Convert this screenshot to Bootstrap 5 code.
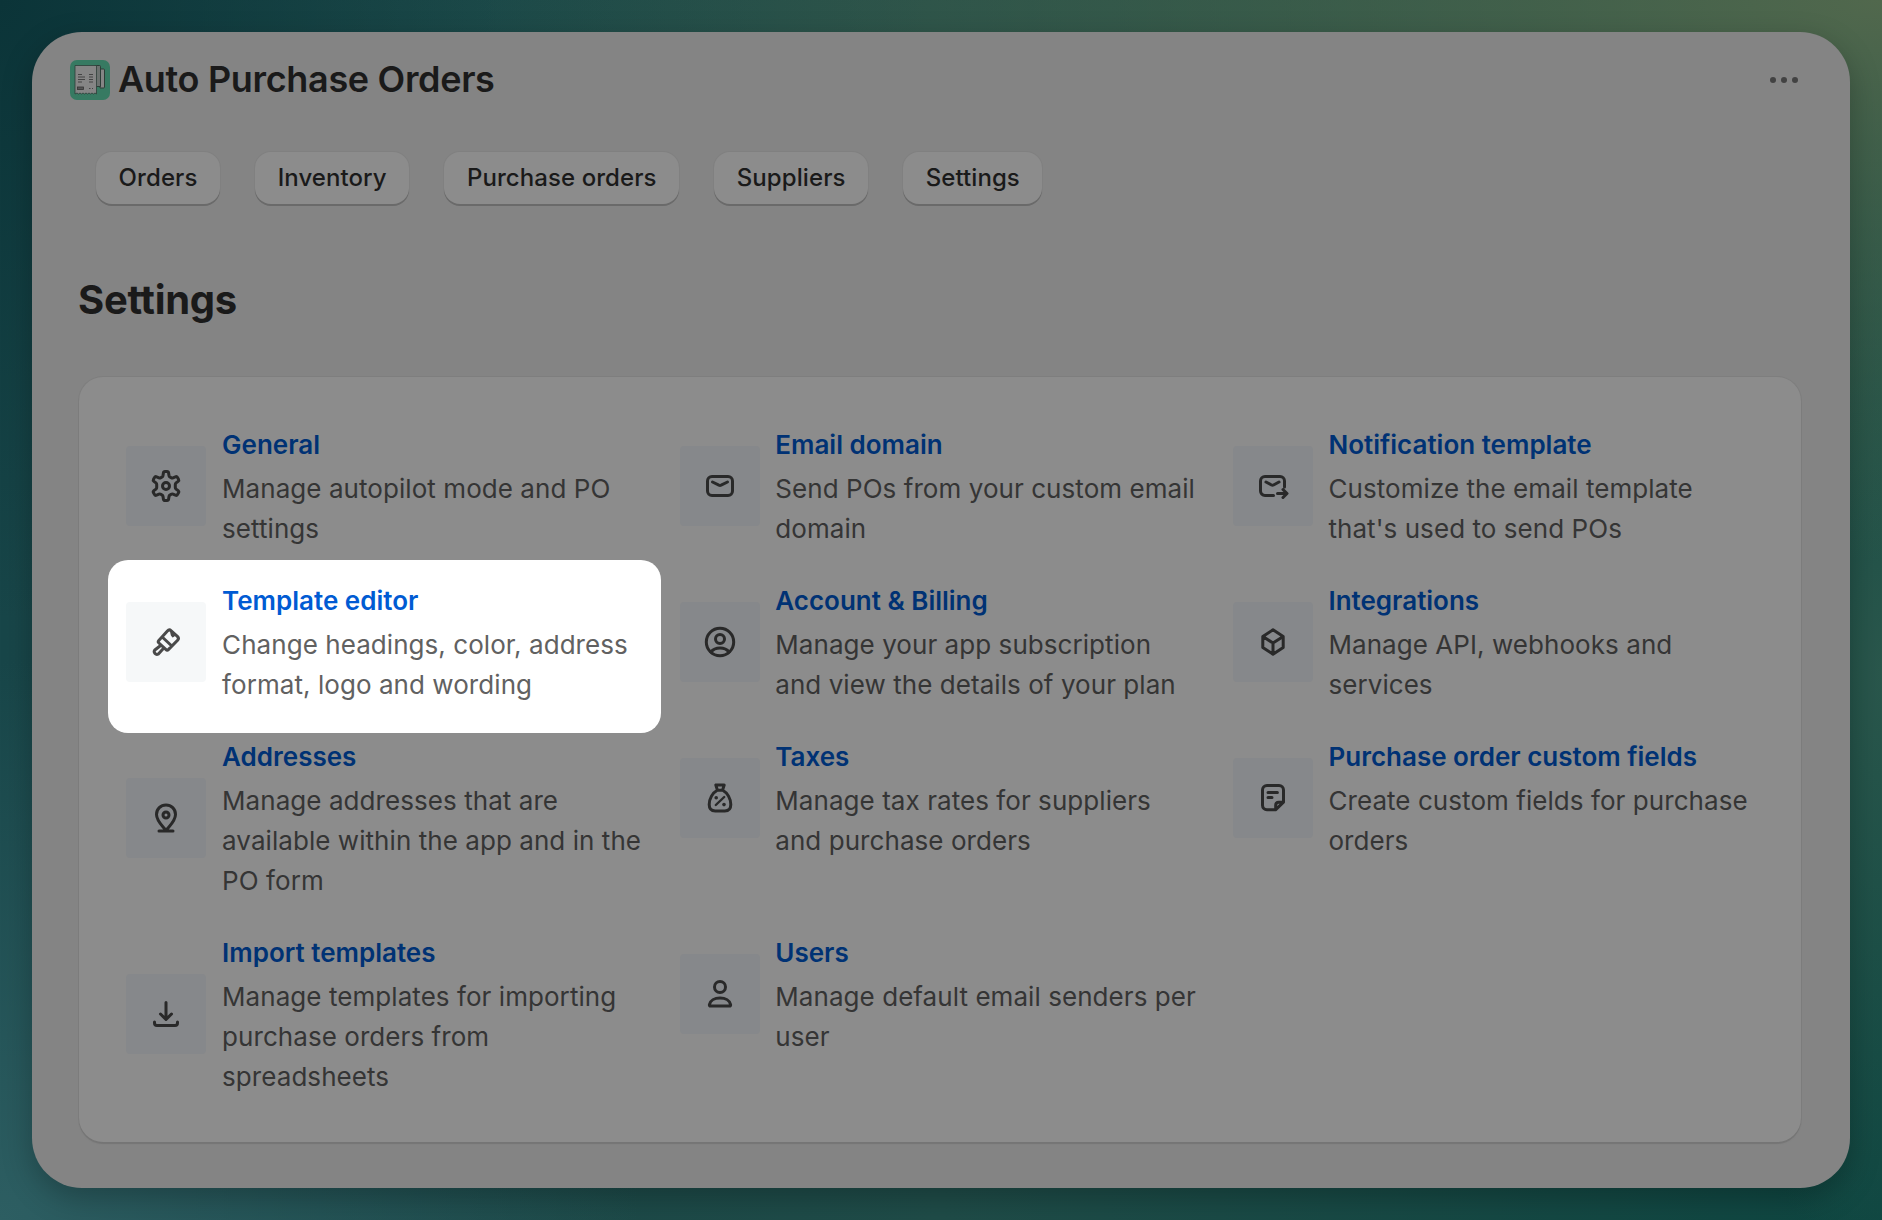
<!DOCTYPE html>
<html lang="en">
<head>
<meta charset="utf-8">
<meta name="viewport" content="width=device-width, initial-scale=1">
<title>Auto Purchase Orders – Settings</title>
<link href="https://cdn.jsdelivr.net/npm/bootstrap@5.3.0/dist/css/bootstrap.min.css" rel="stylesheet">
<style>
  body {
    height: 1220px; padding: 32px; overflow: hidden;
    font-family: Inter, "Liberation Sans", sans-serif; color: #1a1a1a;
    background:
      radial-gradient(ellipse 500px 620px at 0 0, #0b3438 0%, rgba(11,52,56,0) 100%),
      radial-gradient(ellipse 1400px 560px at 100% 0, #51684d 0%, rgba(80,102,77,0) 100%),
      radial-gradient(ellipse 640px 560px at 0 100%, #2d5e62 0%, rgba(43,89,93,0) 100%),
      radial-gradient(ellipse 200px 600px at 100% 55%, #2a574c 0%, rgba(42,87,76,0) 100%),
      linear-gradient(90deg, #184649 0%, #1f4c48 50%, #0e4641 100%);
  }
  .app-shell { height: 1156px; border-radius: 50px; background: #848484; box-shadow: 0 10px 30px rgba(0,0,0,.25); }
  .app-header { height: 68px; padding: 28px 50px 0 38px; }
  .app-logo { width: 40px; height: 40px; margin-right: 8px; }
  .app-title { font-size: 36px; line-height: 40px; font-weight: 600; letter-spacing: -.33px; padding-bottom: 2px; }
  .tabs-row { gap: 35px; padding: 52px 0 0 64px; }
  .tab-btn {
    height: 52px; padding: 0 22.600px; border: 0; border-radius: 16px; background: #8c8c8c; color: #1a1a1a;
    font-size: 24px; line-height: 52px; font-weight: 550; letter-spacing: .08px;
    box-shadow: 0 2px 0 #6a6a6a, 0 0 0 1px #808080;
  }
  .page-title { margin: 72px 0 0 46px; font-size: 40px; line-height: 48px; font-weight: 700; letter-spacing: -.3px; }
  .settings-card {
    margin: 53px 49px 0 47px; padding: 47px 46px 46px 47.400px; border: 0; border-radius: 24px; background: #8c8c8c; color: #353535;
    box-shadow: 0 2px 1px #757575, 0 0 0 1px #7e7e7e;
  }
  .settings-grid { display: grid; grid-template-columns: repeat(3, 521.2px); column-gap: 32px; row-gap: 32px; }
  .setting { gap: 15.700px; position: relative; }
  .tile { width: 80px; height: 80px; border-radius: 4px; background: #86888b; color: #292929; }
  .tile svg { width: 40px; height: 40px; fill: none; stroke: currentColor; stroke-width: 1.5; stroke-linecap: round; stroke-linejoin: round; }
  .setting-body { padding-top: 1px; margin-bottom: -1px; }
  .setting-link { display: block; font-size: 26px; line-height: 40px; font-weight: 600; color: #003274; text-decoration: none; margin-bottom: 4px; white-space: nowrap; }
  .setting-text { font-size: 26px; line-height: 40px; letter-spacing: .06px; margin: 0; }
  .spotlit { z-index: 1; color: #616161; }
  .spotlit::before { content: ""; position: absolute; inset: -20px -13px -29px -18px; z-index: -1; border-radius: 20px; background: #fff; }
  .spotlit .tile { background: #f6f8f9; color: #4a4a4a; }
  .spotlit .setting-link { color: #005bd3; }
</style>
</head>
<body>
<main class="app-shell d-flex flex-column">
  <header class="app-header d-flex align-items-center">
    <svg class="app-logo flex-shrink-0" viewBox="0 0 40 40" aria-hidden="true">
      <rect width="40" height="40" rx="7" fill="#377a62"/>
      <path d="M30 9h3.500q1 0 1 1v17q0 1-1 1H30z" fill="#858585" stroke="#2c3d37"/>
      <path d="M25 5.500h4.500q1 0 1 1v20H25z" fill="#6c716f" stroke="#2c3d37"/>
      <path d="M5 5.500h21.500V34l-1.500-1-1.500 1-1.500-1-1.500 1-1.500-1-1.500 1-1.500-1-1.500 1-1.500-1-1.500 1-1.500-1-1.500 1-1.500-1L5 34z" fill="#858585" stroke="#2c3d37" stroke-width=".8"/>
      <path d="M8 14.500h4M8 17h7M8 19.500h7M8 22h4M19 14.500h4M19 17h4M19 19.500h4M19 22h4M19 28.500h1.500M22 28.500h1" stroke="#333" stroke-width=".8"/>
      <rect x="7.500" y="27" width="6" height="2.500" fill="#555" stroke="#333" stroke-width=".8"/>
    </svg>
    <h1 class="app-title mb-0">Auto Purchase Orders</h1>
    <svg class="ms-auto" width="32" height="40" viewBox="0 0 32 40" fill="#424242" aria-label="More actions"><circle cx="5" cy="20" r="3"/><circle cx="16" cy="20" r="3"/><circle cx="27" cy="20" r="3"/></svg>
  </header>
  <nav class="tabs-row d-flex">
    <button class="btn tab-btn">Orders</button>
    <button class="btn tab-btn">Inventory</button>
    <button class="btn tab-btn">Purchase orders</button>
    <button class="btn tab-btn">Suppliers</button>
    <button class="btn tab-btn">Settings</button>
  </nav>
  <h2 class="page-title">Settings</h2>
  <section class="card settings-card">
    <div class="settings-grid">
      <div class="setting d-flex align-items-center align-self-start">
        <div class="tile d-flex align-items-center justify-content-center flex-shrink-0"><svg viewBox="0 0 20 20"><circle cx="10" cy="10" r="1.750"/><path d="M8.700 3.500q.1-.75.8-.75h1q.7 0 .8.750l.2 1.300q.1.500.6.750l.5.300q.4.250.9.050l1.200-.5q.7-.25 1.050.35l.5.850q.35.600-.2 1.050l-1 .8q-.4.350-.4.850v1.400q0 .5.400.850l1 .8q.55.450.2 1.050l-.5.850q-.35.600-1.050.35l-1.200-.5q-.5-.2-.9.050l-.5.300q-.5.250-.6.750l-.2 1.300q-.1.750-.8.750h-1q-.7 0-.8-.75l-.2-1.300q-.1-.5-.6-.75l-.5-.3q-.4-.25-.9-.05l-1.200.5q-.7.250-1.050-.35l-.5-.85q-.35-.6.200-1.050l1-.8q.4-.35.400-.85V9.300q0-.5-.4-.85l-1-.8q-.55-.45-.2-1.050l.5-.85q.35-.6 1.050-.35l1.200.5q.5.200.9-.05l.5-.3q.5-.25.600-.75z"/></svg></div>
        <div class="setting-body"><a href="#" class="setting-link">General</a><p class="setting-text">Manage autopilot mode and PO settings</p></div>
      </div>
      <div class="setting d-flex align-items-center align-self-start">
        <div class="tile d-flex align-items-center justify-content-center flex-shrink-0"><svg viewBox="0 0 20 20"><rect x="3.750" y="5.250" width="12.500" height="9.500" rx="2.250"/><path d="M6.250 8l3.200 1.600q.55.250 1.100 0L13.750 8"/></svg></div>
        <div class="setting-body"><a href="#" class="setting-link">Email domain</a><p class="setting-text">Send POs from your custom email domain</p></div>
      </div>
      <div class="setting d-flex align-items-center align-self-start">
        <div class="tile d-flex align-items-center justify-content-center flex-shrink-0"><svg viewBox="0 0 20 20"><path d="M10.250 14.750H6A2.250 2.250 0 0 1 3.750 12.500v-5A2.250 2.250 0 0 1 6 5.250h7.500a2.250 2.250 0 0 1 2.250 2.250v3M6.500 8l2.750 1.500q.5.250 1 0L13 8M12.250 13.750h4.250M15 11.750l2 2-2 2"/></svg></div>
        <div class="setting-body"><a href="#" class="setting-link">Notification template</a><p class="setting-text">Customize the email template that's used to send POs</p></div>
      </div>

      <div class="setting spotlit d-flex align-items-center align-self-start">
        <div class="tile d-flex align-items-center justify-content-center flex-shrink-0"><svg viewBox="0 0 20 20"><path d="M6.400 9.200L10.700 4.500q.9-1 1.900-.1l3.100 2.800q1 1 .1 1.950L11.300 13.700q-.7.700-1.400 0L6.450 10.500q-.65-.6-.05-1.300zM8.100 7.500l4.800 4.500M7.500 11.600L4.400 14a1.350 1.350 0 0 0 1.800 1.950L8.900 13"/><path d="M12.700 5.200l.3 1.300M14.100 6.500l-.7.600" stroke-width="1.200"/></svg></div>
        <div class="setting-body"><a href="#" class="setting-link">Template editor</a><p class="setting-text">Change headings, color, address format, logo and wording</p></div>
      </div>
      <div class="setting d-flex align-items-center align-self-start">
        <div class="tile d-flex align-items-center justify-content-center flex-shrink-0"><svg viewBox="0 0 20 20"><circle cx="10" cy="10" r="6.850"/><circle cx="10" cy="8.500" r="2.250"/><path d="M5.500 15q1.500-2 4.500-2t4.500 2"/></svg></div>
        <div class="setting-body"><a href="#" class="setting-link">Account &amp; Billing</a><p class="setting-text">Manage your app subscription and view the details of your plan</p></div>
      </div>
      <div class="setting d-flex align-items-center align-self-start">
        <div class="tile d-flex align-items-center justify-content-center flex-shrink-0"><svg viewBox="0 0 20 20"><path d="M10 3.900l5.100 3.300v5.600L10 16.100l-5.100-3.300V7.200zM5.100 7.350l4.900 3.150 4.900-3.150M10 10.500V16"/></svg></div>
        <div class="setting-body"><a href="#" class="setting-link">Integrations</a><p class="setting-text">Manage API, webhooks and services</p></div>
      </div>

      <div class="setting d-flex align-items-center align-self-start">
        <div class="tile d-flex align-items-center justify-content-center flex-shrink-0"><svg viewBox="0 0 20 20"><path d="M14.750 8.200c0 3.300-3.250 6-4.750 8-1.500-2-4.750-4.700-4.750-8a4.750 4.750 0 0 1 9.500 0zM6.500 16.500h7"/><circle cx="10" cy="8.500" r="1.500"/></svg></div>
        <div class="setting-body"><a href="#" class="setting-link">Addresses</a><p class="setting-text">Manage addresses that are available within the app and in the PO form</p></div>
      </div>
      <div class="setting d-flex align-items-center align-self-start">
        <div class="tile d-flex align-items-center justify-content-center flex-shrink-0"><svg viewBox="0 0 20 20"><path d="M8.600 5.700L7.900 3.500h4.200l-.7 2.200M8.600 6.100h2.800c2.300 1.300 4 4.200 4 7.200 0 2.200-1.100 3.200-3 3.200H7.600c-1.900 0-3-1-3-3.200 0-3 1.700-5.900 4-7.200z"/><path d="M7.900 13.500l4.200-4" stroke-width="1.200"/><g fill="currentColor" stroke="none"><circle cx="8.100" cy="9.900" r=".9"/><circle cx="12" cy="13.300" r=".9"/></g></svg></div>
        <div class="setting-body"><a href="#" class="setting-link">Taxes</a><p class="setting-text">Manage tax rates for suppliers and purchase orders</p></div>
      </div>
      <div class="setting d-flex align-items-center align-self-start">
        <div class="tile d-flex align-items-center justify-content-center flex-shrink-0"><svg viewBox="0 0 20 20"><path d="M11.250 15.900H7A2.250 2.250 0 0 1 4.750 13.650V6A2.250 2.250 0 0 1 7 3.750h6A2.250 2.250 0 0 1 15.250 6v6.100zM11.350 15.600v-2q0-1.500 1.500-1.500H15M7.500 7.250h4.700M7.500 9.750h2"/></svg></div>
        <div class="setting-body"><a href="#" class="setting-link">Purchase order custom fields</a><p class="setting-text">Create custom fields for purchase orders</p></div>
      </div>

      <div class="setting d-flex align-items-center align-self-start">
        <div class="tile d-flex align-items-center justify-content-center flex-shrink-0"><svg viewBox="0 0 20 20"><path d="M10 4.250v8M7.250 10L10 12.700 12.750 10M4.250 14v.5q0 1.250 1.250 1.250h9q1.250 0 1.250-1.250V14"/></svg></div>
        <div class="setting-body"><a href="#" class="setting-link">Import templates</a><p class="setting-text">Manage templates for importing purchase orders from spreadsheets</p></div>
      </div>
      <div class="setting d-flex align-items-center align-self-start">
        <div class="tile d-flex align-items-center justify-content-center flex-shrink-0"><svg viewBox="0 0 20 20"><circle cx="10" cy="6.500" r="2.750"/><path d="M5.300 16q-.7 0-.6-.7c.4-2 2.600-3.300 5.300-3.300s4.900 1.300 5.300 3.300q.1.700-.6.700z"/></svg></div>
        <div class="setting-body"><a href="#" class="setting-link">Users</a><p class="setting-text">Manage default email senders per user</p></div>
      </div>
    </div>
  </section>
</main>
<script src="https://cdn.jsdelivr.net/npm/bootstrap@5.3.0/dist/js/bootstrap.bundle.min.js"></script>
</body>
</html>
